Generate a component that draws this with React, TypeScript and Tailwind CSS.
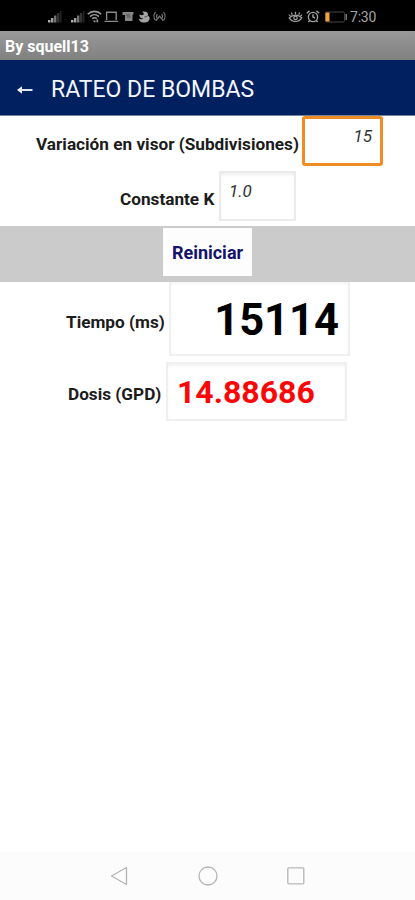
import type { ReactNode } from 'react';

function Signal() {
  return (
    <svg width="15" height="12" viewBox="0 0 15 12" className="shrink-0">
      <rect x="1" y="9" width="2.4" height="2.5" fill="#b0b0b0" />
      <rect x="4" y="7" width="2.4" height="4.5" fill="#a0a0a0" />
      <rect x="7" y="4.500" width="2.4" height="7" fill="#747474" />
      <rect x="10" y="2" width="2.4" height="9.500" fill="#343434" />
      <rect x="13" y="0" width="1.5" height="11.500" fill="#242424" />
    </svg>
  );
}

function Wifi() {
  return (
    <svg width="15" height="13" viewBox="0 0 15 13" fill="none" stroke="#9a9a9a" strokeWidth="1.6" className="ml-[2px] shrink-0">
      <path d="M.7 4.2C4.500.4 10.500.4 14.300 4.200M3 6.600c2.600-2.400 6.400-2.400 9 0M5.200 8.700c1.400-1.200 3.200-1.200 4.600 0" />
      <path d="M6.500 11.300h2M10.300 9.500v2.800" strokeWidth="1.700" />
    </svg>
  );
}

function Laptop() {
  return (
    <svg width="15" height="12" viewBox="0 0 15 12" fill="none" stroke="#8a8a8a" strokeWidth="1.4" className="ml-[2px] shrink-0">
      <path d="M2.600 9V1.200h9.600V9M.5 10.400h13.500" />
    </svg>
  );
}

function Scroll() {
  return (
    <svg width="13" height="11" viewBox="0 0 13 11" className="ml-[3px] shrink-0">
      <path d="M.5 1h11v2.500H10.500V10H3V4H.5z" fill="#858585" />
      <path d="M4 4h4M5 6h3.500" stroke="#3a3a3a" strokeWidth=".8" />
    </svg>
  );
}

function Swirl() {
  return (
    <svg width="13" height="12" viewBox="0 0 13 12" className="ml-[3px] shrink-0">
      <path d="M4 .8C7.500-.4 11 1.200 9.800 4.500 13 6 12 11 7.500 11.500 3.500 12 .8 10 .8 7.500c2 1.200 3.800 1 4.500 0C3 7.600 1 6 1.500 3.500c1.500 1 3 1 4 .3C6 2.500 5.300 1.300 4 .8z" fill="#a4a4a4" />
      <path d="M6.500 5.800c1.500.3 2.800-.3 3.300-1.300" stroke="#333" strokeWidth=".8" fill="none" />
    </svg>
  );
}

function Broadcast() {
  return (
    <svg width="13" height="11" viewBox="0 0 13 11" fill="none" stroke="#787878" strokeWidth="1.2" className="ml-[2px] shrink-0">
      <path d="M2.500 1.200C.5 3.500.5 7 2.500 9.500M10.500 1.200c2 2.300 2 5.800 0 8.300M4.300 3.200c-1 1.500-1 3 0 4.500M8.700 3.200c1 1.500 1 3 0 4.500M3 9.500l3.500-4.300L10 9.500" />
    </svg>
  );
}

function Eye() {
  return (
    <svg width="15" height="12" viewBox="0 0 15 12" fill="none" stroke="#a2a2a2" strokeWidth="1.2" className="shrink-0">
      <path d="M1.200 6.800c3.300-3.600 9.300-3.600 12.600 0-3.300 4.800-9.300 4.800-12.600 0zM7.500 .8v2.500M3.300 1.500l1 2.200M11.700 1.500l-1 2.200M.9 3.600l1.500 1.500M14.100 3.600l-1.500 1.500" />
      <circle cx="7.500" cy="6.900" r="1.700" />
    </svg>
  );
}

function Alarm() {
  return (
    <svg width="14" height="13" viewBox="0 0 14 13" fill="none" stroke="#a0a0a0" strokeWidth="1.400" className="ml-[3px] shrink-0">
      <circle cx="7" cy="7" r="4.600" />
      <path d="M.8 3.200L3.500.9M13.200 3.200L10.500.9M7 4.300V7l2 1M3.600 10.500L2.400 12M10.400 10.500l1.200 1.500" />
    </svg>
  );
}

function Battery() {
  return (
    <svg width="24" height="12" viewBox="0 0 24 12" className="ml-[4px] shrink-0">
      <rect x="1.500" y="1" width="19" height="10" rx="1.500" fill="none" stroke="#444" />
      <rect x="1.500" y="1.500" width="4" height="9" fill="#efa23c" />
      <path d="M22.200 3v6" stroke="#8c8c8c" strokeWidth="1.300" />
    </svg>
  );
}

function Label({ children }: { children: ReactNode }) {
  return <span className="whitespace-nowrap text-[17.2px] leading-5 font-bold text-[#1c1c1c]">{children}</span>;
}

export default function App() {
  return (
    <div className="flex h-[900px] w-[415px] flex-col overflow-hidden bg-white font-['Roboto',sans-serif]">
      <div className="flex h-[31px] shrink-0 items-center bg-black pt-[2px] pl-[47px]">
        <Signal />
        <div className="w-[8px]" />
        <Signal />
        <Wifi />
        <Laptop />
        <Scroll />
        <Swirl />
        <Broadcast />
        <div className="w-[122px]" />
        <Eye />
        <Alarm />
        <Battery />
        <span className="ml-[2px] text-[14px] leading-4 tracking-[-0.2px] text-[#a3a3a3]">7:30</span>
      </div>

      <div className="flex h-[29px] shrink-0 items-center bg-linear-to-b from-[#999] to-[#808080] pt-[2px] pl-[5px]">
        <span className="text-[16px] leading-5 font-bold text-white">By squell13</span>
      </div>

      <header className="flex h-[56px] shrink-0 items-center border-b border-[#76819f] bg-[#002060] pt-[5px]">
        <svg width="16" height="10" viewBox="0 0 16 10" className="ml-[17px] shrink-0">
          <path d="M0 5l5-3.700v7.400z" fill="#f2f4fa" />
          <path d="M3 5h12.500" stroke="#dfe3ef" strokeWidth="2" />
        </svg>
        <h1 className="ml-[18px] text-[23px] leading-7 whitespace-nowrap text-[#f5f7ff]">RATEO DE BOMBAS</h1>
      </header>

      <main className="flex flex-1 flex-col">
        <div className="flex h-[54px] items-start pl-[36px]">
          <div className="flex h-[55px] w-[266px] items-center">
            <Label>Variación en visor (Subdivisiones)</Label>
          </div>
          <div className="flex h-[50px] w-[81px] justify-end rounded-[3px] border-[3px] border-[#ef8d24] pt-[7px] pr-[8px] text-[17px] leading-5 text-[#333] italic">
            15
          </div>
        </div>

        <div className="flex h-[56px] items-start pt-[1px] pl-[120px]">
          <div className="flex h-[55px] w-[99px] items-center">
            <Label>Constante K</Label>
          </div>
          <div className="h-[50px] w-[77px] border-2 border-[#ebebeb] pt-[8px] pl-[8px] text-[17px] leading-5 text-[#333] italic shadow-[inset_0_2px_3px_#f0f0f0]">
            1.0
          </div>
        </div>

        <div className="flex h-[56px] items-start justify-center bg-[#cbcbcb] pt-[2px]">
          <button className="h-[48px] w-[89px] bg-[#fdfdfd] pt-[1px] text-[18px] font-bold text-[#14146a]">Reiniciar</button>
        </div>

        <div className="flex h-[74px] items-center pl-[66px]">
          <div className="mt-[7px] w-[103px]">
            <Label>Tiempo (ms)</Label>
          </div>
          <div className="flex h-[74px] w-[181px] items-center justify-end border-2 border-t-0 border-[#f0f0f0] pt-[6px] pr-[9px] text-[43.5px] font-bold text-black shadow-[inset_0_2px_3px_#f5f5f5]">
            15114
          </div>
        </div>

        <div className="mt-[6px] flex h-[59px] items-center pl-[68px]">
          <div className="mt-[6px] w-[98px]">
            <Label>Dosis (GPD)</Label>
          </div>
          <div className="flex h-[59px] w-[181px] items-center border-2 border-[#efefef] pt-[1px] pl-[9px] text-[32px] font-bold text-[#fa0808] shadow-[inset_0_2px_3px_#f3f3f3]">
            14.88686
          </div>
        </div>
      </main>

      <nav className="flex h-[48px] shrink-0 items-center bg-[#fcfcfc] pl-[110px]">
        <svg width="20" height="20" viewBox="0 0 20 20" fill="none" stroke="#b5b5b5" strokeWidth="1.300">
          <path d="M1.500 10L16.500 1.500v17z" strokeLinejoin="round" />
        </svg>
        <svg width="20" height="20" viewBox="0 0 20 20" fill="none" stroke="#b5b5b5" strokeWidth="1.300" className="ml-[68px]">
          <circle cx="10" cy="10" r="9" />
        </svg>
        <svg width="20" height="20" viewBox="0 0 20 20" fill="none" stroke="#b5b5b5" strokeWidth="1.300" className="ml-[68px]">
          <rect x="1.800" y="1.800" width="16" height="16" rx="1" />
        </svg>
      </nav>
    </div>
  );
}
